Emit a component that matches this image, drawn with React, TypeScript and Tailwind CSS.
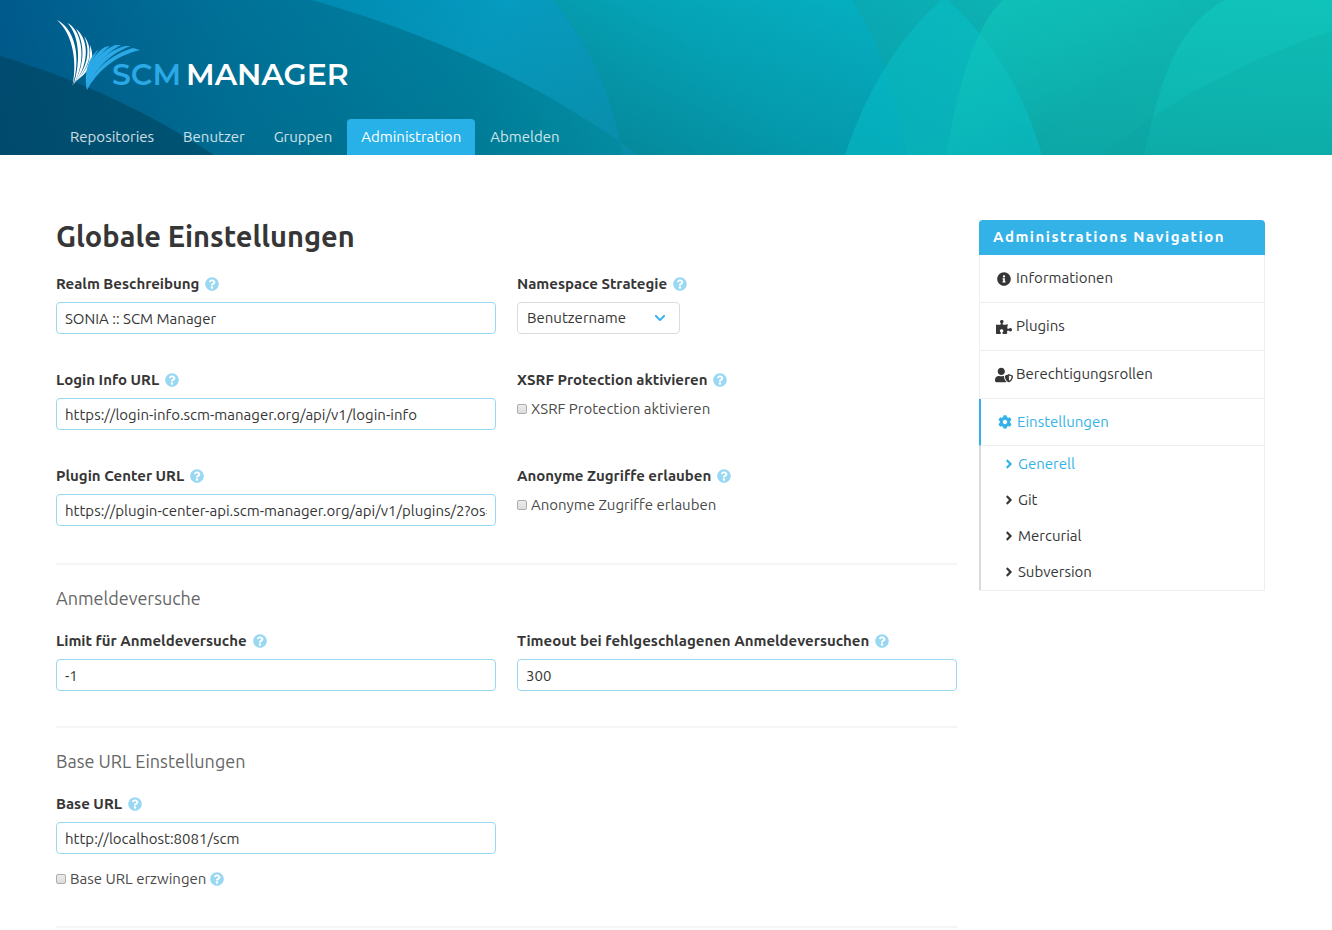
import { useId, useState } from "react";
import type { ReactNode } from "react";
import {
  FaAngleRight,
  FaChevronDown,
  FaCog,
  FaInfoCircle,
  FaPuzzlePiece,
  FaQuestionCircle,
  FaUserShield,
} from "react-icons/fa";

function Waves() {
  return (
    <svg
      className="absolute inset-0 h-full w-full"
      viewBox="0 0 1332 155"
      preserveAspectRatio="none"
      aria-hidden="true"
    >
      <defs>
        <linearGradient id="base" x1="0" y1="0" x2="1332" y2="0" gradientUnits="userSpaceOnUse">
          <stop offset="0" stopColor="#005a8c" />
          <stop offset="0.17" stopColor="#007198" />
          <stop offset="0.35" stopColor="#00829f" />
          <stop offset="0.5" stopColor="#049aae" />
          <stop offset="0.66" stopColor="#0aabb4" />
          <stop offset="0.8" stopColor="#0eb6b2" />
          <stop offset="1" stopColor="#0fb8b2" />
        </linearGradient>
        <linearGradient id="sky" x1="320" y1="0" x2="620" y2="150" gradientUnits="userSpaceOnUse">
          <stop offset="0" stopColor="#008bb3" />
          <stop offset="0.5" stopColor="#069bc0" />
          <stop offset="1" stopColor="#0a98b6" />
        </linearGradient>
        <linearGradient id="sea" x1="840" y1="0" x2="660" y2="190" gradientUnits="userSpaceOnUse">
          <stop offset="0" stopColor="#05aebf" />
          <stop offset="0.5" stopColor="#05a4b7" />
          <stop offset="1" stopColor="#0693a6" />
        </linearGradient>
        <linearGradient id="shade" x1="0" y1="0" x2="0" y2="155" gradientUnits="userSpaceOnUse">
          <stop offset="0" stopColor="#003c50" stopOpacity="0" />
          <stop offset="1" stopColor="#003c50" stopOpacity="0.12" />
        </linearGradient>
        <linearGradient id="mint" x1="0" y1="0" x2="0" y2="155" gradientUnits="userSpaceOnUse">
          <stop offset="0" stopColor="#10c6bc" />
          <stop offset="1" stopColor="#10c6bc" stopOpacity="0.3" />
        </linearGradient>
        <linearGradient id="mintFade" x1="990" y1="0" x2="1080" y2="110" gradientUnits="userSpaceOnUse">
          <stop offset="0" stopColor="#10c8bc" stopOpacity="0.9" />
          <stop offset="1" stopColor="#10c8bc" stopOpacity="0" />
        </linearGradient>
      </defs>
      <rect width="1332" height="155" fill="url(#base)" />
      <path d="M552 0H852C880 45 896 95 907 155H623C612 95 590 45 552 0Z" fill="url(#sea)" />
      <path d="M312 0H552C590 45 612 95 623 155H638C540 82 430 34 312 0Z" fill="url(#sky)" />
      <rect width="1332" height="155" fill="url(#shade)" />
      <path d="M0 56C80 80 148 112 214 155H0Z" fill="#003d55" fillOpacity="0.5" />
      <path d="M941 0C897 40 866 92 845 155H1042C1024 92 994 42 948 0Z" fill="#06c4cc" fillOpacity="0.45" />
      <path d="M1003 0C972 30 958 88 946 155H1180V0Z" fill="url(#mintFade)" fillOpacity="0.7" />
      <path d="M1225 0C1176 26 1160 82 1144 155H1332V0Z" fill="url(#mint)" fillOpacity="0.75" />
      <path d="M1332 31C1240 62 1160 105 1104 155H1332Z" fill="#0a9a9c" fillOpacity="0.16" />
    </svg>
  );
}

function Logo() {
  return (
    <svg className="h-[72px] w-[296px]" viewBox="0 0 296 72" role="img" aria-label="SCM-Manager">
      <g fill="#ffffff">
        <path d="M1 0C18 8 26 36 16.5 66C22 38 15 12 1 0Z" />
        <path d="M11.5 3C25 10 32 38 17.5 65C26 38 22 14 11.5 3Z" />
        <path d="M20 9C32 18 35 42 18 64C30 42 28 22 20 9Z" />
        <path d="M28 16C37 27 36 46 19 62C33 45 34 29 28 16Z" />
        <path d="M34 25C39 38 36 50 20 61C32 49 35 40 34 25Z" />
      </g>
      <g fill="#2aa9e6">
        <path d="M43 29C34 36 27 50 31 70C31 51 35 40 43 29Z" />
        <path d="M54 26L49 27C36 35 29 50 31 70C33 51 40 37 54 26Z" />
        <path d="M65 25L59 25C43 32 31 48 31 70C35 51 46 35 65 25Z" />
        <path d="M75 26L69 26C50 31 34 47 31 70C38 51 52 34 75 26Z" />
        <path d="M84 30L77 28C56 34 37 49 31 70C41 52 58 36 84 30Z" />
      </g>
      <text x="56" y="65" fontFamily="Montserrat, Lato, sans-serif" fontWeight="600" fontSize="30" fill="#2aa9e6">
        SCM
      </text>
      <text x="130" y="65" fontFamily="Montserrat, Lato, sans-serif" fontWeight="600" fontSize="30" fill="#ffffff">
        MANAGER
      </text>
    </svg>
  );
}

const tabs = ["Repositories", "Benutzer", "Gruppen", "Administration", "Abmelden"];

function Help() {
  return <FaQuestionCircle className="size-3.5 shrink-0 text-[#99d8f3]" aria-hidden="true" />;
}

function Caption({ children }: { children: ReactNode }) {
  return (
    <span className="flex h-6 items-center gap-1.5 text-[15px] font-bold text-[#363636]">
      {children}
      <Help />
    </span>
  );
}

function TextField({ label, value }: { label: string; value: string }) {
  const id = useId();
  return (
    <div>
      <label htmlFor={id}>
        <Caption>{label}</Caption>
      </label>
      <input
        id={id}
        type="text"
        defaultValue={value}
        className="mt-1.5 block h-8 w-full rounded border border-[#98d8f3] bg-white px-2 text-[15px] text-[#363636] outline-none"
      />
    </div>
  );
}

function CheckField({ label, help }: { label: string; help?: boolean }) {
  return (
    <label className="flex h-6 items-center gap-1 text-[15px] text-[#4a4a4a]">
      <input
        type="checkbox"
        className="size-2.5 shrink-0 appearance-none rounded-xs border border-[#adadad] bg-linear-to-b from-[#ececec] to-[#dcdcdc] checked:bg-[#33b2e8] checked:from-[#33b2e8] checked:to-[#33b2e8]"
      />
      <span>{label}</span>
      {help && <Help />}
    </label>
  );
}

function CheckGroup({ label }: { label: string }) {
  return (
    <div>
      <Caption>{label}</Caption>
      <div className="mt-[5px]">
        <CheckField label={label} />
      </div>
    </div>
  );
}

function SelectField({ label, options }: { label: string; options: string[] }) {
  const id = useId();
  return (
    <div>
      <label htmlFor={id}>
        <Caption>{label}</Caption>
      </label>
      <div className="relative mt-1.5 w-[163px]">
        <select
          id={id}
          className="block h-8 w-full appearance-none rounded border border-[#dbdbdb] bg-white pr-8 pl-[9px] text-[15px] text-[#363636] outline-none"
        >
          {options.map((o) => (
            <option key={o}>{o}</option>
          ))}
        </select>
        <FaChevronDown
          className="pointer-events-none absolute top-2.5 right-3.5 size-3 text-[#33b2e8]"
          aria-hidden="true"
        />
      </div>
    </div>
  );
}

function Divider() {
  return <hr className="my-0 h-0.5 border-0 bg-[#f5f5f5]" />;
}

function Subtitle({ children }: { children: ReactNode }) {
  return <h2 className="text-lg leading-6 text-[#666666]">{children}</h2>;
}

const sections = [
  { label: "Informationen", icon: FaInfoCircle, size: "size-3.5" },
  { label: "Plugins", icon: FaPuzzlePiece, size: "size-4" },
  { label: "Berechtigungsrollen", icon: FaUserShield, size: "size-[18px]" },
];

const systems = ["Generell", "Git", "Mercurial", "Subversion"];

function SideMenu() {
  return (
    <nav className="text-[15px] text-[#363636]" aria-label="Administrations Navigation">
      <p className="flex h-[35px] items-center rounded-t bg-[#33b2e8] px-3.5 font-bold tracking-widest text-white">
        Administrations Navigation
      </p>
      <ul className="border-r border-b border-[#eeeeee]">
        {sections.map(({ label, icon: Icon, size }) => (
          <li key={label} className="border-b border-l border-[#eeeeee]">
            <a href="#" className="flex h-[47px] items-center gap-[3px] pl-3.5">
              <span className="flex w-[19px] justify-center">
                <Icon className={size} aria-hidden="true" />
              </span>
              {label}
            </a>
          </li>
        ))}
        <li>
          <a
            href="#"
            className="flex h-[47px] items-center gap-[3px] border-b border-l-2 border-b-[#eeeeee] border-l-[#33b2e8] pl-3.5 text-[#33b2e8]"
          >
            <span className="flex w-[19px] justify-center">
              <FaCog className="size-3.5" aria-hidden="true" />
            </span>
            Einstellungen
          </a>
          <ul className="border-l-2 border-[#dbdbdb]">
            {systems.map((label, i) => (
              <li key={label}>
                <a
                  href="#"
                  className={`flex h-9 items-center gap-0.5 pl-[21px] ${i === 0 ? "text-[#33b2e8]" : ""}`}
                >
                  <FaAngleRight className="size-3.5" aria-hidden="true" />
                  {label}
                </a>
              </li>
            ))}
          </ul>
        </li>
      </ul>
    </nav>
  );
}

export default function App() {
  const [active, setActive] = useState("Administration");
  return (
    <div className="min-h-screen bg-white font-['Ubuntu','Noto_Sans',sans-serif]">
      <header className="relative overflow-hidden">
        <Waves />
        <div className="relative px-14 pt-5">
          <Logo />
          <nav className="mt-[27px] flex gap-px" aria-label="Hauptnavigation">
            {tabs.map((tab) => (
              <a
                key={tab}
                href="#"
                onClick={() => setActive(tab)}
                className={`flex h-9 items-center rounded-t px-3.5 text-[15px] ${
                  tab === active ? "bg-[#28b1e8] text-white" : "text-white/80"
                }`}
              >
                {tab}
              </a>
            ))}
          </nav>
        </div>
      </header>

      <main className="flex items-start gap-[22px] pt-[65px] pr-[67px] pb-6 pl-14">
        <form className="min-w-0 flex-1">
          <h1 className="text-[29px] leading-8 font-bold text-[#363636]">Globale Einstellungen</h1>
          <div className="mt-5 mb-[37px] grid grid-cols-2 gap-x-[21px] gap-y-[34px]">
            <TextField label="Realm Beschreibung" value="SONIA :: SCM Manager" />
            <SelectField
              label="Namespace Strategie"
              options={["Benutzername", "Aktuelles Jahr", "Repository Typ"]}
            />
            <TextField label="Login Info URL" value="https://login-info.scm-manager.org/api/v1/login-info" />
            <CheckGroup label="XSRF Protection aktivieren" />
            <TextField
              label="Plugin Center URL"
              value="https://plugin-center-api.scm-manager.org/api/v1/plugins/2?os=linux&arch=amd64"
            />
            <CheckGroup label="Anonyme Zugriffe erlauben" />
          </div>
          <Divider />
          <div className="mt-[21px] mb-[35px]">
            <Subtitle>Anmeldeversuche</Subtitle>
            <div className="mt-[19px] grid grid-cols-2 gap-x-[21px]">
              <TextField label="Limit für Anmeldeversuche" value="-1" />
              <TextField label="Timeout bei fehlgeschlagenen Anmeldeversuchen" value="300" />
            </div>
          </div>
          <Divider />
          <div className="mt-[21px] mb-[35px]">
            <Subtitle>Base URL Einstellungen</Subtitle>
            <div className="mt-[19px] grid grid-cols-2 gap-x-[21px]">
              <div>
                <TextField label="Base URL" value="http://localhost:8081/scm" />
                <div className="mt-[13px]">
                  <CheckField label="Base URL erzwingen" help />
                </div>
              </div>
            </div>
          </div>
          <Divider />
        </form>
        <aside className="w-[286px] shrink-0">
          <SideMenu />
        </aside>
      </main>
    </div>
  );
}
